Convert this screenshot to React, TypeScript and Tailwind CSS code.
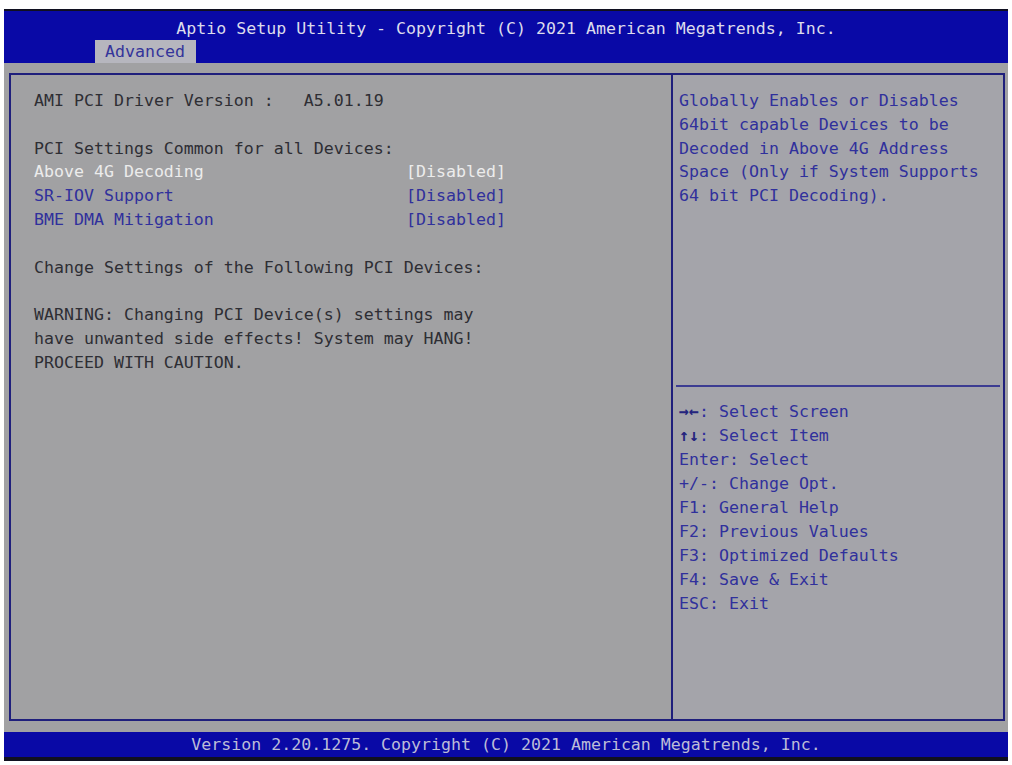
import React from "react";

const mono = { fontFamily: '"DejaVu Sans Mono", "Liberation Mono", monospace' };

export default function App() {
  return (
    <div className="w-[1012px] h-[765px] bg-white overflow-hidden" style={mono}>
      <div className="pt-[9px] pl-[4px] pr-[4px] flex flex-col h-full">
        <div className="h-[2px] bg-[#101020]" />
        {/* top blue bar */}
        <div className="bg-[#0909a6] h-[52px] flex flex-col">
          <div className="h-[29px] pt-[7px] leading-[22px] text-center text-[16.6px] text-[#dcdcec] whitespace-pre">
            Aptio Setup Utility - Copyright (C) 2021 American Megatrends, Inc.
          </div>
          <div className="flex pl-[91px]">
            <div className="h-[23px] w-[101px] bg-[#b6b6be] pl-[10px] leading-[23px] text-[16.6px] text-[#34349a]">
              Advanced
            </div>
          </div>
        </div>
        {/* gray body */}
        <div className="bg-[#a1a1a3] h-[669px] pt-[10px] pl-[5px] pr-[3px]">
          <div className="h-[648px] border-2 border-[#1f1f7c] flex">
            {/* left column */}
            <div className="w-[662px] border-r-2 border-[#1f1f7c] pl-[23px] pt-[14px] text-[16.6px] leading-[23.8px] text-[#2e2e34] whitespace-pre">
              <div>AMI PCI Driver Version :   A5.01.19</div>
              <div>&nbsp;</div>
              <div>PCI Settings Common for all Devices:</div>
              <div className="flex w-[480px]">
                <span className="w-[372px] text-[#ececec]">Above 4G Decoding</span>
                <span className="text-[#ececec]">[Disabled]</span>
              </div>
              <div className="flex w-[480px] text-[#30309c]">
                <span className="w-[372px]">SR-IOV Support</span>
                <span>[Disabled]</span>
              </div>
              <div className="flex w-[480px] text-[#30309c]">
                <span className="w-[372px]">BME DMA Mitigation</span>
                <span>[Disabled]</span>
              </div>
              <div>&nbsp;</div>
              <div>Change Settings of the Following PCI Devices:</div>
              <div>&nbsp;</div>
              <div>WARNING: Changing PCI Device(s) settings may</div>
              <div>have unwanted side effects! System may HANG!</div>
              <div>PROCEED WITH CAUTION.</div>
            </div>
            {/* right column */}
            <div className="flex-1 flex flex-col bg-[#a4a4aa]">
              <div className="h-[310px] pl-[6px] pt-[14px] text-[16.6px] leading-[23.8px] text-[#30309c] whitespace-pre">
                <div>Globally Enables or Disables</div>
                <div>64bit capable Devices to be</div>
                <div>Decoded in Above 4G Address</div>
                <div>Space (Only if System Supports</div>
                <div>64 bit PCI Decoding).</div>
              </div>
              <div className="ml-[3px] mr-[3px] h-[2px] bg-[#3c3c92]" />
              <div className="pl-[6px] pt-[13px] text-[16.6px] leading-[24px] text-[#30309c] whitespace-pre">
                <div><span className="text-[#24247e] font-bold">→←</span>: Select Screen</div>
                <div><span className="text-[#24247e] font-bold">↑↓</span>: Select Item</div>
                <div>Enter: Select</div>
                <div>+/-: Change Opt.</div>
                <div>F1: General Help</div>
                <div>F2: Previous Values</div>
                <div>F3: Optimized Defaults</div>
                <div>F4: Save &amp; Exit</div>
                <div>ESC: Exit</div>
              </div>
            </div>
          </div>
        </div>
        {/* footer */}
        <div className="bg-[#0909a6] h-[25px] leading-[25px] text-center text-[16.6px] text-[#bcbcd8] whitespace-pre">
          Version 2.20.1275. Copyright (C) 2021 American Megatrends, Inc.
        </div>
        <div className="h-[4px] bg-[#101020]" />
      </div>
    </div>
  );
}
